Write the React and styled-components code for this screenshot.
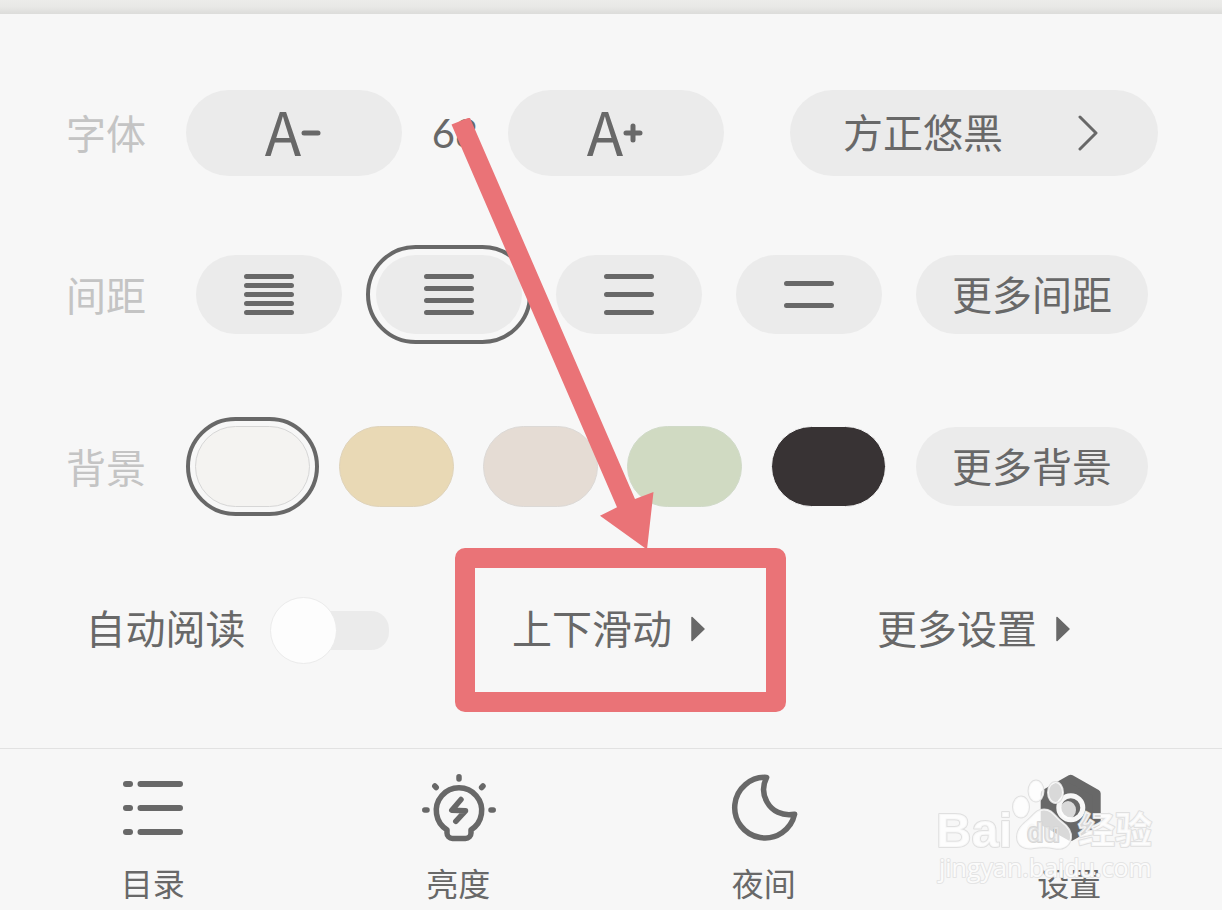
import React, { useState } from "react";
import styled, { createGlobalStyle, css } from "styled-components";

const ink = "#686868";
const pill = "#ebebeb";
const accent = "#ea7377";

const GlobalStyle = createGlobalStyle`
  * { box-sizing: border-box; }
  body {
    margin: 0;
    background: #f7f7f7;
    color: ${ink};
    font-family: "Noto Sans CJK SC", "Noto Sans", sans-serif;
    font-size: 40px;
    line-height: 48px;
  }
  button, input { font: inherit; color: inherit; margin: 0; padding: 0; border: 0; background: none; }
  button { cursor: pointer; white-space: nowrap; }
  svg { display: block; flex: none; }
`;

const Page = styled.main`
  display: flex;
  flex-direction: column;
  min-height: 100vh;
  overflow: hidden;
`;

const PageEdge = styled.div`
  height: 14px;
  background: linear-gradient(#ececea, #e8e8e6 50%, #dcdcda);
`;

const Panel = styled.section`
  display: flex;
  flex-direction: column;
  flex: 1;
  padding: 76px 0 36px;
`;

const Row = styled.div`
  display: flex;
  align-items: center;
  padding: 0 64px 0 66px;
  margin-bottom: ${(p) => p.$below}px;
`;

const RowLabel = styled.span`
  flex: none;
  width: 120px;
  padding-bottom: 2px;
  color: #c4c4c4;
`;

const Controls = styled.div`
  display: flex;
  flex: 1;
  align-items: center;
  justify-content: space-between;
`;

const SizeGroup = styled.div`
  display: flex;
  align-items: center;
`;

const SizeButton = styled.button`
  display: flex;
  align-items: center;
  justify-content: center;
  width: 216px;
  height: 86px;
  border-radius: 43px;
  background: ${pill};
`;

const Letter = styled.span`
  padding-bottom: 6px;
  font-size: 60px;
  line-height: 80px;
`;

const SizeValue = styled.output`
  width: 106px;
  text-align: center;
  font-family: Lato, sans-serif;
`;

const FontButton = styled.button`
  display: flex;
  align-items: center;
  justify-content: space-between;
  width: 368px;
  height: 86px;
  padding: 0 60px 0 53px;
  border-radius: 43px;
  background: ${pill};
`;

const ButtonText = styled.span`
  padding-bottom: 4px;
`;

const MoreButton = styled.button`
  width: 232px;
  height: 79px;
  margin: 0 10px;
  padding-bottom: 4px;
  border-radius: 40px;
  background: ${pill};
`;

const ring = css`
  display: flex;
  align-items: center;
  justify-content: center;
  height: 99px;
  border: 4px solid transparent;
  border-radius: 50px;
  cursor: pointer;
  &:has(input:checked) { border-color: ${ink}; }
`;

const SpacingOption = styled.label`
  ${ring}
  width: 166px;
`;

const SpacingFace = styled.span`
  display: grid;
  place-items: center;
  width: 146px;
  height: 79px;
  border-radius: 40px;
  background: ${pill};
  > * { grid-area: 1 / 1; }
`;

const HiddenRadio = styled.input`
  appearance: none;
  width: 100%;
  height: 100%;
`;

const SwatchOption = styled.label`
  ${ring}
  width: 133px;
`;

const Swatch = styled.input`
  appearance: none;
  width: 115px;
  height: 81px;
  border: 1px solid ${(p) => p.$edge};
  border-radius: 41px;
  background: ${(p) => p.$color};
`;

const ActionRow = styled.div`
  display: grid;
  grid-template-columns: 474fr 270fr 460fr;
  align-items: center;
  justify-items: center;
  height: 164px;
  padding: 0 18px 2px 0;
`;

const ToggleLabel = styled.label`
  display: flex;
  align-items: center;
  gap: 24px;
  white-space: nowrap;
`;

const Toggle = styled.input`
  appearance: none;
  display: grid;
  align-items: center;
  width: 119px;
  height: 65px;
  &::before, &::after { content: ""; grid-area: 1 / 1; }
  &::before {
    justify-self: end;
    width: 96px;
    height: 39px;
    border-radius: 18px;
    background: ${pill};
  }
  &::after {
    justify-self: ${(p) => (p.checked ? "end" : "start")};
    width: 65px;
    height: 65px;
    border: 1px solid #ebebeb;
    border-radius: 50%;
    background: #fdfdfd;
  }
`;

const ActionSlot = styled.div`
  position: relative;
`;

const ActionButton = styled.button`
  display: flex;
  align-items: center;
  gap: 18px;
`;

const Annotation = styled.svg`
  position: absolute;
  left: -62px;
  bottom: -59px;
  pointer-events: none;
`;

const Nav = styled.nav`
  position: relative;
  display: grid;
  grid-template-columns: repeat(4, 1fr);
  border-top: 1px solid #e2e2e2;
`;

const NavButton = styled.button`
  display: flex;
  flex-direction: column;
  align-items: center;
  gap: 18px;
  padding: 23px 0 8px;
  font-size: 32px;
  line-height: 40px;
`;

const Watermark = styled.svg`
  position: absolute;
  right: 62px;
  top: 25px;
  pointer-events: none;
`;

const LINES = {
  "五行": [2, 11, 20, 29, 38],
  "四行": [2, 14, 26, 38],
  "三行": [2, 20, 38],
  "两行": [9, 31],
};

const SWATCHES = [
  { name: "白色", color: "#f4f3f1", edge: "#d6d6d6" },
  { name: "米黄", color: "#e9d9b5", edge: "#dfd3ba" },
  { name: "浅褐", color: "#e5dcd4", edge: "#dcd9d6" },
  { name: "浅绿", color: "#d0dac2", edge: "#d0dac8" },
  { name: "黑色", color: "#383334", edge: "#f7f7f7" },
];

const Stroked = ({ w, h, width, children }) => (
  <svg width={w} height={h} viewBox={`0 0 ${w} ${h}`} fill="none" stroke={ink}
    strokeWidth={width} strokeLinecap="round" strokeLinejoin="round" aria-hidden="true">
    {children}
  </svg>
);

const LinesIcon = ({ ys }) => (
  <Stroked w={50} h={42} width={5}>
    <path d={ys.map((y) => `M2.5 ${y + 0.5}h45`).join("")} />
  </Stroked>
);

const Triangle = () => (
  <svg width="16" height="28" viewBox="0 0 16 28" fill={ink} stroke={ink} strokeWidth="1.5" strokeLinejoin="round" aria-hidden="true">
    <path d="M2 2.5V25.5L14 14Z" />
  </svg>
);

const ListIcon = () => (
  <Stroked w={80} h={72} width={6}>
    <path d="M27.5 12H67M27.5 36H67M27.5 60H67" />
    <g fill={ink} stroke="none">
      <rect x="10" y="9" width="10" height="6" rx="3" />
      <rect x="10" y="33" width="10" height="6" rx="3" />
      <rect x="10" y="57" width="10" height="6" rx="3" />
    </g>
  </Stroked>
);

const BulbIcon = () => (
  <Stroked w={80} h={72} width={5.5}>
    <path d="M29 57.8A22.7 22.7 0 1 1 53 57.8V61a5.5 5.5 0 0 1-5.5 5.5h-13A5.5 5.5 0 0 1 29 61Z" />
    <path d="M43 27.5L33.8 38.2L47.5 38.8L37.8 49.3" />
    <path d="M41 4.7v2.2M6.8 38h2.2M73 38h2.2M16.8 14l1.4 1.5M65 14l-1.4 1.5" />
  </Stroked>
);

const MoonIcon = () => (
  <Stroked w={80} h={72} width={5.5}>
    <path d="M42.600 5.400A30.300 30.300 0 1 0 70.600 42.200C58 44.500 48 39 43 30C38.500 22 38.500 13.500 42.600 5.400Z" />
  </Stroked>
);

const HexIcon = () => (
  <svg width="80" height="72" viewBox="0 0 80 72" aria-hidden="true">
    <path d="M41.7 6.7L67.7 21.4V50.4L41.7 65L15.7 50.4V21.4Z" fill={ink} stroke={ink} strokeWidth="8" strokeLinejoin="round" />
    <circle cx="41.8" cy="35.8" r="12" fill="none" stroke="#f7f7f7" strokeWidth="5" />
  </svg>
);

const NAV = [
  { label: "目录", Icon: ListIcon },
  { label: "亮度", Icon: BulbIcon },
  { label: "夜间", Icon: MoonIcon },
  { label: "设置", Icon: HexIcon },
];

const HighlightArrow = () => (
  <Annotation width="338" height="596" viewBox="450 118 338 596" fill={accent} aria-hidden="true">
    <path d="M451.5 124.5L468 118H470L635 499L653.5 492L647 549.5L600 515.7L617 507.3Z" />
    <path fillRule="evenodd" d="M465 548H776a10 10 0 0 1 10 10V702a10 10 0 0 1-10 10H465a10 10 0 0 1-10-10V558a10 10 0 0 1 10-10ZM475 568V692H766V568Z" />
  </Annotation>
);

const BaiduMark = () => (
  <Watermark width="230" height="112" viewBox="930 774 230 112" fill="#ffffff" fillOpacity="0.75"
    stroke="#e0e0e0" strokeWidth="2" paintOrder="stroke" strokeLinejoin="round">
    <defs>
      <mask id="du-cut" maskUnits="userSpaceOnUse" x="1000" y="774" width="90" height="90">
        <rect x="1000" y="774" width="90" height="90" fill="#fff" fillOpacity="1" stroke="none" />
        <path d="M1036 831a4 6 0 1 0 0 .1M1047 829v6a4 4 0 0 0 8 0v-6" fill="none" stroke="#000" strokeWidth="3" />
      </mask>
    </defs>
    <text x="936" y="847" fontFamily="Liberation Sans" fontWeight="700" fontSize="49">Bai</text>
    <g mask="url(#du-cut)">
      <ellipse cx="1021" cy="807" rx="8" ry="10.5" />
      <ellipse cx="1036" cy="791" rx="7.5" ry="10.5" />
      <ellipse cx="1055.5" cy="792.5" rx="7.5" ry="10.5" />
      <ellipse cx="1068" cy="810" rx="8" ry="9" stroke="none" />
      <path d="M1044 809.5C1053 809.5 1055 817 1062 822C1069 827 1071.500 833 1071 838C1070 846 1063 850 1055 848.500C1048 847 1040 847 1034 848C1025 850 1017 846 1017 837C1017 829 1023 824 1028 820C1034 815 1036 809.500 1044 809.500Z" />
    </g>
    <text x="1027" y="842" fontFamily="Liberation Sans" fontWeight="700" fontSize="27" fill="#ededed" fillOpacity="0.5" stroke="#d6d6d6">du</text>
    <text x="1078" y="844" fontFamily="Noto Sans CJK SC" fontWeight="700" fontSize="37">经验</text>
    <text x="939" y="877" fontFamily="Open Sans" fontSize="25" fillOpacity="0.9" stroke="#e4e4e4">jingyan.baidu.com</text>
  </Watermark>
);

export default function App() {
  const [size, setSize] = useState(68);
  const [spacing, setSpacing] = useState("四行");
  const [background, setBackground] = useState("白色");
  const [auto, setAuto] = useState(false);

  return (
    <Page>
      <GlobalStyle />
      <PageEdge />
      <Panel>
        <Row $below={69}>
          <RowLabel>字体</RowLabel>
          <Controls>
            <SizeGroup>
              <SizeButton aria-label="缩小字体" onClick={() => setSize(size - 1)}>
                <Letter>A</Letter>
                <Stroked w={22} h={24} width={5}><path d="M3 12h14" /></Stroked>
              </SizeButton>
              <SizeValue>{size}</SizeValue>
              <SizeButton aria-label="放大字体" onClick={() => setSize(size + 1)}>
                <Letter>A</Letter>
                <Stroked w={22} h={24} width={5}><path d="M3 12h14M10 5v14" /></Stroked>
              </SizeButton>
            </SizeGroup>
            <FontButton>
              <ButtonText>方正悠黑</ButtonText>
              <Stroked w={20} h={36} width={3}><path d="M2 2L18 18L2 34" /></Stroked>
            </FontButton>
          </Controls>
        </Row>

        <Row $below={73}>
          <RowLabel>间距</RowLabel>
          <Controls role="radiogroup" aria-label="间距">
            {Object.entries(LINES).map(([name, ys]) => (
              <SpacingOption key={name}>
                <SpacingFace>
                  <HiddenRadio type="radio" name="spacing" aria-label={name}
                    checked={spacing === name} onChange={() => setSpacing(name)} />
                  <LinesIcon ys={ys} />
                </SpacingFace>
              </SpacingOption>
            ))}
            <MoreButton>更多间距</MoreButton>
          </Controls>
        </Row>

        <Row $below={32}>
          <RowLabel>背景</RowLabel>
          <Controls role="radiogroup" aria-label="背景">
            {SWATCHES.map(({ name, color, edge }) => (
              <SwatchOption key={name}>
                <Swatch type="radio" name="background" aria-label={name} $color={color} $edge={edge}
                  checked={background === name} onChange={() => setBackground(name)} />
              </SwatchOption>
            ))}
            <MoreButton>更多背景</MoreButton>
          </Controls>
        </Row>

        <ActionRow>
          <ToggleLabel>
            <ButtonText>自动阅读</ButtonText>
            <Toggle type="checkbox" checked={auto} onChange={() => setAuto(!auto)} />
          </ToggleLabel>
          <ActionSlot>
            <ActionButton><ButtonText>上下滑动</ButtonText><Triangle /></ActionButton>
            <HighlightArrow />
          </ActionSlot>
          <ActionButton><ButtonText>更多设置</ButtonText><Triangle /></ActionButton>
        </ActionRow>
      </Panel>

      <Nav>
        {NAV.map(({ label, Icon }) => (
          <NavButton key={label}>
            <Icon />
            {label}
          </NavButton>
        ))}
        <BaiduMark />
      </Nav>
    </Page>
  );
}
